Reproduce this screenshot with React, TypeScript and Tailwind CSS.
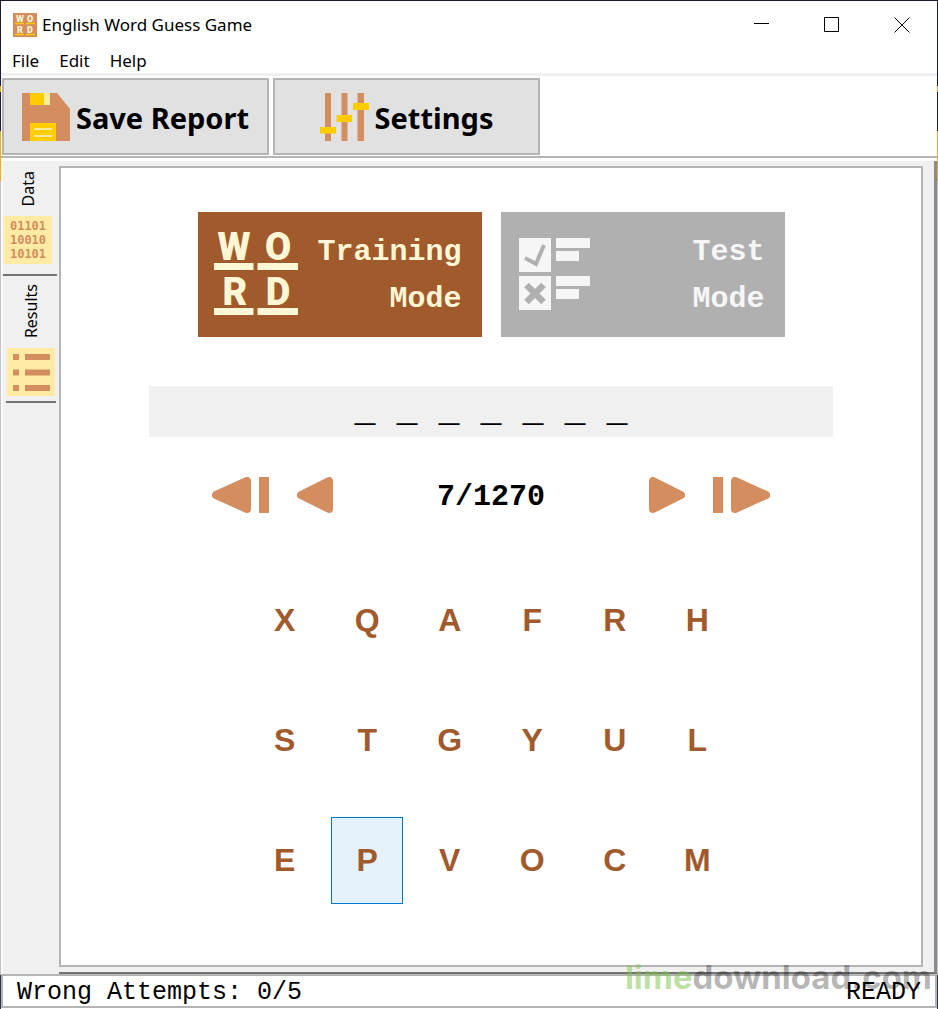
import { useState } from 'react';

const ROWS = ['XQAFRH', 'STGYUL', 'EPVOCM'];
const TOTAL_WORDS = 1270;
const WORD_LENGTH = 7;

const SANS = "font-['Noto_Sans',sans-serif]";
const MONO = "font-['Liberation_Mono',monospace]";

export default function App() {
  const [index, setIndex] = useState(7);
  const [mode, setMode] = useState<'training' | 'test'>('training');
  const [selected, setSelected] = useState('P');

  const goTo = (n: number) => setIndex(Math.min(TOTAL_WORDS, Math.max(1, n)));

  return (
    <div className="relative flex min-h-screen flex-col bg-[linear-gradient(#1b1c33_86px,#f0ae0c_86px_92px,#1b1c33_92px_131px,#f0ae0c_131px_181px,#c4c4c8_181px_975px,#2c3350_975px)] px-px pt-px">
      <div className={`flex flex-1 flex-col bg-white text-black ${SANS}`}>
        <TitleBar />
        <nav className="flex h-[25px] items-center gap-[6px] px-1 text-[17px] leading-6">
          {['File', 'Edit', 'Help'].map((item) => (
            <button key={item} type="button" className="px-[7px]">{item}</button>
          ))}
        </nav>
        <div className="flex gap-1 border-t-[3px] border-b-2 border-t-[#f0f0f0] border-b-[#b4b4b4] px-px pt-[2px] pb-px">
          <ToolButton label="Save Report"><SaveIcon /></ToolButton>
          <ToolButton label="Settings"><SlidersIcon /></ToolButton>
        </div>

        <main className="flex flex-1 border-t-[3px] border-white bg-[#f0f0f0]">
          <div className="flex w-[58px] shrink-0 flex-col border-l-2 border-[#f8f8f8]">
            <SideTab label="Data" active>
              <span className="flex h-12 w-12 flex-col items-center justify-center bg-[#ffeba4] font-['DejaVu_Sans_Mono',monospace] text-[12px] leading-[14px] font-bold text-[#d38d5f]">
                <span>01101</span>
                <span>10010</span>
                <span>10101</span>
              </span>
            </SideTab>
            <SideTab label="Results"><ListIcon /></SideTab>
          </div>

          <div className="flex flex-1 flex-col border-r-[3px] border-b-2 border-r-[#8a8a8a] border-b-[#747474] pt-[5px] pr-[11px] pb-[5px]">
            <section className="flex flex-1 flex-col items-center border-2 border-[#b4b4b4] bg-white pt-11 pb-11">
              <div className="flex gap-[19px]">
                <ModeButton
                  lines={['Training', 'Mode']}
                  active={mode === 'training'}
                  onClick={() => setMode('training')}
                >
                  <WordLogo />
                </ModeButton>
                <ModeButton lines={['Test', 'Mode']} active={mode === 'test'} onClick={() => setMode('test')}>
                  <ChecklistIcon />
                </ModeButton>
              </div>

              <div className="mt-[49px] w-full px-[88px]">
                <div className={`flex h-[51px] items-center justify-center bg-[#f0f0f0] text-[35px] leading-10 font-bold ${MONO}`}>
                  {Array(WORD_LENGTH).fill('_').join(' ')}
                </div>
              </div>

              <div className="mt-10 flex h-9 w-[558px] items-center justify-between">
                <div className="flex gap-7">
                  <button type="button" aria-label="First word" onClick={() => goTo(1)}><SkipIcon flipped /></button>
                  <button type="button" aria-label="Previous word" onClick={() => goTo(index - 1)}><ArrowIcon flipped /></button>
                </div>
                <span className={`pt-1 text-[30px] leading-9 font-bold ${MONO}`}>{index}/{TOTAL_WORDS}</span>
                <div className="flex gap-7">
                  <button type="button" aria-label="Next word" onClick={() => goTo(index + 1)}><ArrowIcon /></button>
                  <button type="button" aria-label="Last word" onClick={() => goTo(TOTAL_WORDS)}><SkipIcon /></button>
                </div>
              </div>

              <div className="mt-[47px] grid w-[495px] grid-cols-6">
                {ROWS.join('').split('').map((letter) => (
                  <div key={letter} className="flex h-[120px] items-center justify-center">
                    <button
                      type="button"
                      onClick={() => setSelected(letter)}
                      className={`h-[87px] w-[72px] border font-['Liberation_Sans',sans-serif] text-[32px] font-bold text-[#a05a2c] ${
                        selected === letter ? 'border-[#0078d7] bg-[#e5f1fb]' : 'border-transparent'
                      }`}
                    >
                      {letter}
                    </button>
                  </div>
                ))}
              </div>
            </section>
          </div>
        </main>

        <footer className={`mb-px flex h-[34px] items-center justify-between border-2 border-[#b4b4b4] px-[14px] pt-1 text-[25px] leading-7 ${MONO}`}>
          <span>Wrong Attempts: 0/5</span>
          <span>READY</span>
        </footer>
      </div>

      <div className="pointer-events-none absolute right-[6px] bottom-[12px] font-['Inter',sans-serif] text-[33px] leading-[40px] font-bold">
        <span className="text-[#7fc24b]/50">lime</span>
        <span className="text-black/30">download.com</span>
      </div>
    </div>
  );
}

function TitleBar() {
  return (
    <header className="flex h-[47px] items-center pl-3">
      <svg width="24" height="24" viewBox="0 0 24 24" aria-hidden="true">
        <rect width="24" height="24" fill="#d38d5f" />
        <g fill="#fff6d5" fontFamily="Roboto" fontWeight="900" fontSize="9" textAnchor="middle">
          <text x="7" y="9">W</text>
          <text x="17" y="9">O</text>
          <text x="7" y="20">R</text>
          <text x="17" y="20">D</text>
        </g>
        <path d="M2 10.5h9M13 10.5h9M2 21.5h9M13 21.5h9" stroke="#ffcc00" strokeWidth="1.5" />
      </svg>
      <h1 className="ml-[5px] flex-1 text-[17px] leading-6">English Word Guess Game</h1>
      <button type="button" aria-label="Minimize" className="flex h-full w-[70px] items-center justify-center">
        <svg width="16" height="16" viewBox="0 0 16 16" stroke="#000"><path d="M0 6.5h15" /></svg>
      </button>
      <button type="button" aria-label="Maximize" className="flex h-full w-[70px] items-center justify-center">
        <svg width="16" height="16" viewBox="0 0 16 16" stroke="#000" fill="none"><path d="M.5.5h14v14H.5z" /></svg>
      </button>
      <button type="button" aria-label="Close" className="flex h-full w-[70px] items-center justify-center">
        <svg width="16" height="16" viewBox="0 0 16 16" stroke="#000"><path d="M.5.5l15 15M15.5.5l-15 15" /></svg>
      </button>
    </header>
  );
}

function ToolButton({ label, children }: { label: string; children: React.ReactNode }) {
  return (
    <button
      type="button"
      className="flex h-[77px] w-[267px] items-center justify-center gap-[6px] border-2 border-[#b4b4b4] bg-[#e1e1e1] text-[29px] leading-10 font-bold"
    >
      {children}
      <span className="pt-[2px]">{label}</span>
    </button>
  );
}

function SideTab({ label, active, children }: { label: string; active?: boolean; children: React.ReactNode }) {
  return (
    <button
      type="button"
      className={`flex flex-col items-center gap-[10px] border-b-2 border-[#747474] ${
        active ? 'mr-[2px] h-[115px] pt-[10px] pr-1' : 'mr-[3px] ml-[3px] h-[127px] pt-2'
      }`}
    >
      <span className="rotate-180 text-[16px] leading-6 [writing-mode:vertical-rl]">{label}</span>
      {children}
    </button>
  );
}

interface ModeButtonProps {
  lines: string[];
  active: boolean;
  onClick: () => void;
  children: React.ReactNode;
}

function ModeButton({ lines, active, onClick, children }: ModeButtonProps) {
  return (
    <button
      type="button"
      onClick={onClick}
      className={`flex h-[125px] w-[284px] items-center justify-between pr-5 pl-4 ${
        active ? 'bg-[#a05a2c] text-[#fff6d5]' : 'bg-[#b0b0b0] text-[#f6f6f6]'
      }`}
    >
      {children}
      <span className={`flex flex-col pt-[2px] text-right text-[30px] leading-[47px] font-bold ${MONO}`}>
        {lines.map((line) => <span key={line}>{line}</span>)}
      </span>
    </button>
  );
}

function WordLogo() {
  return (
    <svg width="84" height="104" viewBox="0 -9 84 104" fill="currentColor" aria-hidden="true">
      <g fontFamily="Roboto, sans-serif" fontWeight="900" fontSize="38" textAnchor="middle">
        <text x="20" y="28">W</text>
        <text x="64" y="28">O</text>
        <text x="21" y="73">R</text>
        <text x="64" y="73">D</text>
      </g>
      <path d="M0 31h39.500v7H0zM43.500 31H84v7H43.500zM0 76h39.500v7H0zM43.500 76H84v7H43.500z" />
    </svg>
  );
}

function ChecklistIcon() {
  return (
    <svg width="76" height="76" viewBox="0 0 76 76" fill="currentColor" aria-hidden="true">
      <path d="M2 1h32v34H2zM2 39h32v34H2zM39 1h34v10H39zM39 14h23v10H39zM39 39h34v10H39zM39 52h23v10H39z" />
      <path d="M8 21l11 6 8-19" fill="none" stroke="#b0b0b0" strokeWidth="4" />
      <path d="M9.500 48l17 17M26.500 48l-17 17" stroke="#b0b0b0" strokeWidth="6.500" />
    </svg>
  );
}

function SaveIcon() {
  return (
    <svg width="48" height="48" viewBox="0 0 48 48" aria-hidden="true">
      <path d="M0 0h35l13 16v32H0z" fill="#d38d5f" />
      <path d="M8 0h20v12H8zM8 30h26v18H8z" fill="#ffcc00" />
      <path d="M22 0h6v12h-6zM12 35h18v2H12zM12 42h18v2H12z" fill="#ffeaa0" />
    </svg>
  );
}

function SlidersIcon() {
  return (
    <svg width="49" height="48" viewBox="0 0 49 48" aria-hidden="true">
      <path d="M5 0h6v48H5zM21.500 0h6v48h-6zM37.500 0h6.500v48h-6.500z" fill="#d38d5f" />
      <path d="M0 34h16v6.500H0zM16.500 22H32v7H16.500zM33 10h16v7H33z" fill="#ffcc00" />
    </svg>
  );
}

function ListIcon() {
  return (
    <svg width="48" height="48" viewBox="0 0 48 48" aria-hidden="true">
      <rect width="48" height="48" fill="#ffeba4" />
      <path d="M6 6h6v6H6zM18 6h25v6H18zM6 21.500h6v6H6zM18 21.500h25v6H18zM6 37h6v6H6zM18 37h25v6H18z" fill="#d38d5f" />
    </svg>
  );
}

function ArrowIcon({ flipped }: { flipped?: boolean }) {
  return (
    <svg width="36" height="36" viewBox="0 0 36 36" className={flipped ? '-scale-x-100' : ''} aria-hidden="true">
      <path d="M4 4v28L32 18z" fill="#d38d5f" stroke="#d38d5f" strokeWidth="8" strokeLinejoin="round" />
    </svg>
  );
}

function SkipIcon({ flipped }: { flipped?: boolean }) {
  return (
    <svg width="57" height="36" viewBox="0 0 57 36" className={flipped ? '-scale-x-100' : ''} aria-hidden="true">
      <path d="M0 0h10v36H0z" fill="#d38d5f" />
      <path d="M22 4v28L53 18z" fill="#d38d5f" stroke="#d38d5f" strokeWidth="8" strokeLinejoin="round" />
    </svg>
  );
}
